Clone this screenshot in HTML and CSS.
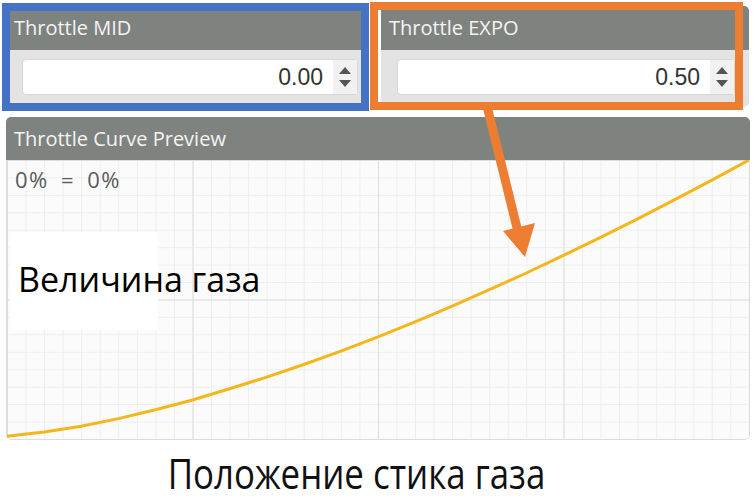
FILE: index.html
```html
<!DOCTYPE html>
<html lang="ru">
<head>
    <meta charset="UTF-8"/>
    <meta name="viewport" content="width=device-width, initial-scale=1.0"/>
    <title>Throttle Curve</title>
    <link rel="stylesheet" href="styles.css">
</head>
<body>

<div class="page">
    <div class="top_row">
        <div class="panel field_panel mid_panel">
            <div class="panel_header">Throttle MID</div>
            <div class="panel_body">
                <div class="number_input">
                    <span class="value">0.00</span>
                    <span class="spinner">
                        <svg width="14" height="26" viewBox="0 0 14 26"><path d="M1 10 L7 3 L13 10 Z M1 16 L13 16 L7 23 Z" fill="#555"/></svg>
                    </span>
                </div>
            </div>
        </div>
        <div class="panel field_panel expo_panel">
            <div class="panel_header">Throttle EXPO</div>
            <div class="panel_body">
                <div class="number_input">
                    <span class="value">0.50</span>
                    <span class="spinner">
                        <svg width="14" height="26" viewBox="0 0 14 26"><path d="M1 10 L7 3 L13 10 Z M1 16 L13 16 L7 23 Z" fill="#555"/></svg>
                    </span>
                </div>
            </div>
        </div>
    </div>

    <div class="panel curve_panel">
        <div class="panel_header">Throttle Curve Preview</div>
        <div class="curve_body">
            <svg class="curve" viewBox="0 0 100 100" preserveAspectRatio="none">
                <polyline points="0,99 5,97.5 10,95.4 15,92.7 20,89.5 25,86 30,82 35,77.8 40,73.3 45,68.5 50,63.4 55,58 60,52.4 65,46.5 70,40.5 75,34.2 80,27.7 85,21.1 90,14.2 95,7.2 100,0"
                          fill="none" stroke="#f4b61a" stroke-width="3" stroke-linecap="round" vector-effect="non-scaling-stroke"/>
            </svg>
            <div class="curve_label">0% = 0%</div>
        </div>
    </div>

    <div class="caption"><span class="caption_text">Положение стика газа</span></div>

    <!-- annotations drawn over the screenshot -->
    <div class="mark mark_blue"></div>
    <div class="mark mark_orange"></div>
    <svg class="arrow" width="755" height="502" viewBox="0 0 755 502">
        <line x1="487" y1="106" x2="519" y2="236" stroke="#ed7d31" stroke-width="9"/>
        <polygon points="503,231 535,223 525,257" fill="#ed7d31"/>
    </svg>
    <div class="axis_label">Величина газа</div>
</div>

</body>
</html>
```

FILE: styles.css
```css
body {
    margin: 0;
    background: #ffffff;
    font-family: 'Open Sans', 'Noto Sans', sans-serif;
}

.page {
    position: relative;
    width: 755px;
    height: 502px;
    overflow: hidden;
}

.top_row {
    display: flex;
    gap: 15px;
    padding: 6px 6px 0 6px;
}

.panel {
    background: #e3e3e3;
    border-radius: 5px;
    overflow: hidden;
}

.panel_header {
    background: #7e837f;
    color: #f4f4f4;
    font-size: 20px;
    height: 44px;
    line-height: 44px;
    padding-left: 8px;
}

.mid_panel {
    width: 360px;
}

.expo_panel {
    flex: 1;
}

.panel_body {
    padding: 9px 14px 12px 16px;
}

.mid_panel .panel_body {
    padding-right: 8px;
}

.number_input {
    display: flex;
    align-items: center;
    height: 36px;
    background: #ffffff;
    border: 1px solid #d6d6d6;
    border-radius: 4px;
    box-sizing: border-box;
}

.value {
    flex: 1;
    text-align: right;
    font-family: 'Liberation Sans', Arial, sans-serif;
    font-size: 23px;
    color: #333;
    padding-right: 10px;
}

.spinner {
    display: flex;
    align-items: center;
    justify-content: center;
    width: 24px;
    height: 34px;
    background: #f1f1f1;
}

.spinner svg {
    display: block;
}

.curve_panel {
    margin: 10px 5px 0 6px;
    background: #fbfbfb;
}

.curve_panel .panel_header {
    height: 43px;
    line-height: 43px;
}

.curve_body {
    position: relative;
    height: 279px;
    border: 1px solid #dcdcdc;
    border-top: none;
    border-radius: 0 0 5px 5px;
    background-color: #fbfbfb;
    background-image:
        linear-gradient(to right, #dddddd 1px, transparent 1px),
        linear-gradient(to bottom, #dddddd 1px, transparent 1px),
        linear-gradient(to right, #eeeeee 1px, transparent 1px),
        linear-gradient(to bottom, #eeeeee 1px, transparent 1px);
    background-size: 25% 100%, 100% 50%, 2.5% 100%, 100% 6.25%;
}

.curve {
    display: block;
    width: 100%;
    height: 100%;
}

.curve_label {
    position: absolute;
    left: 8px;
    top: 4px;
    font-size: 22px;
    letter-spacing: 1.5px;
    word-spacing: 5px;
    color: #5a5a5a;
}

.caption {
    text-align: center;
    margin-top: 4px;
    margin-right: 42px;
}

.caption_text {
    display: inline-block;
    font-size: 42px;
    color: #111;
    transform: scaleX(0.83);
}

.mark {
    position: absolute;
    border: 8px solid;
    box-sizing: border-box;
}

.mark_blue {
    left: 2px;
    top: 3px;
    width: 367px;
    height: 108px;
    border-color: #4472c4;
}

.mark_orange {
    left: 370px;
    top: 2px;
    width: 373px;
    height: 108px;
    border-color: #ed7d31;
}

.arrow {
    position: absolute;
    left: 0;
    top: 0;
    pointer-events: none;
}

.axis_label {
    position: absolute;
    left: 10px;
    top: 232px;
    width: 140px;
    height: 98px;
    padding-left: 8px;
    background: #ffffff;
    color: #000;
    font-size: 34px;
    line-height: 94px;
    white-space: nowrap;
}
```
